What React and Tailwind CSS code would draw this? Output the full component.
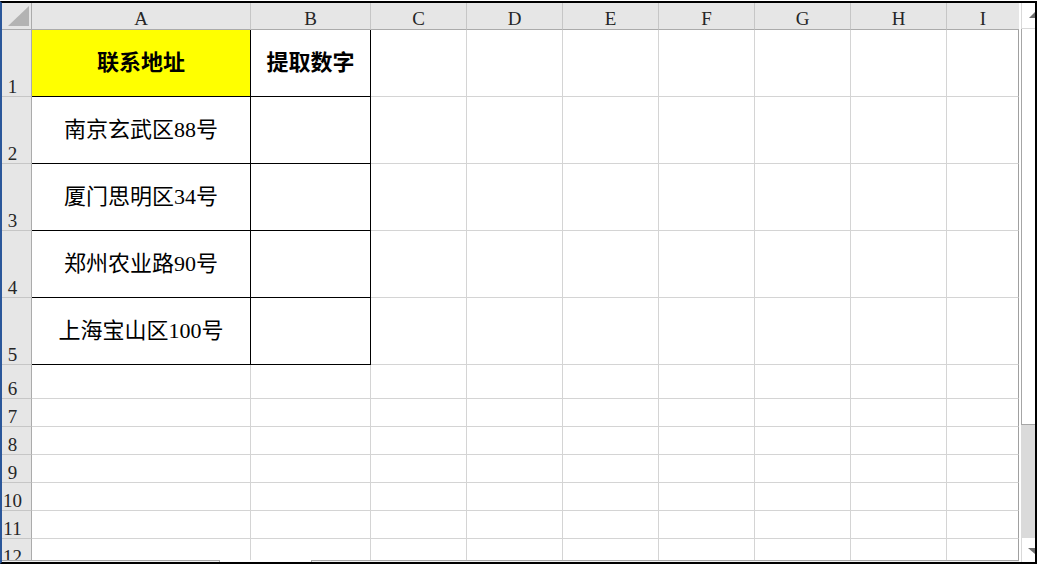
import React from "react";

const cols = ["A", "B", "C", "D", "E", "F", "G", "H", "I"];

const data = [
  ["联系地址", "提取数字"],
  ["南京玄武区88号", ""],
  ["厦门思明区34号", ""],
  ["郑州农业路90号", ""],
  ["上海宝山区100号", ""],
];

const rows = [1, 2, 3, 4, 5, 6, 7, 8, 9, 10, 11, 12];

const Cell = ({ row, col }) => {
  const inTable = row <= 5 && col < 2;
  const last = col === 8;
  let cls = "flex items-center justify-center border-r border-b ";
  if (inTable) {
    cls += "border-black";
  } else if (last) {
    cls += "border-b-[#d4d4d4] border-r-[#a0a0a0]";
  } else if (row === 5 && col === 2) {
    cls += "border-[#d4d4d4]";
  } else {
    cls += "border-[#d4d4d4]";
  }
  if (row === 1 && col === 0) cls += " bg-[#ffff00]";
  const text = inTable ? data[row - 1][col] : "";
  return (
    <div className={cls}>
      {text && (
        <span
          className={
            row === 1
              ? "text-[22px] leading-none font-bold text-black"
              : "text-[22px] leading-none text-black"
          }
        >
          {text}
        </span>
      )}
    </div>
  );
};

const App = () => {
  return (
    <div className="w-[1038px] h-[564px] bg-white pt-[1px] overflow-hidden font-['Liberation_Serif','Noto_Sans_CJK_SC',serif]">
      <div className="w-[1037px] h-[563px] flex border-t-2 border-t-black border-l-2 border-l-[#2b579a] border-r-2 border-r-black border-b-2 border-b-black">
        {/* sheet */}
        <div className="w-[1017px] flex flex-col">
          <div className="h-[557px] overflow-hidden">
            <div className="grid grid-cols-[30px_219px_120px_96px_96px_96px_96px_96px_96px_72px] grid-rows-[27px_67px_67px_67px_67px_67px_34px_28px_28px_28px_28px_28px_28px]">
              <div className="relative bg-[#e6e6e6] border-r border-b border-[#ababab]">
                <svg className="absolute left-0 top-0" width="30" height="27" viewBox="0 0 30 27">
                  <polygon points="6,23 27,23 27,3" fill="#b3b3b3" />
                </svg>
              </div>
              {cols.map((c, i) => (
                <div
                  key={c}
                  className={
                    i === 8
                      ? "flex justify-center items-center pt-[5px] bg-[#e6e6e6] border-b border-b-[#ababab] text-[19px] leading-[19px] text-[#262626]"
                      : "flex justify-center items-center pt-[5px] bg-[#e6e6e6] border-b border-b-[#ababab] border-r border-r-[#c6c6c6] text-[19px] leading-[19px] text-[#262626]"
                  }
                >
                  {c}
                </div>
              ))}
              {rows.map((r) => (
                <React.Fragment key={r}>
                  <div className="flex items-end justify-center pr-[8px] bg-[#e6e6e6] border-r border-r-[#ababab] border-b border-b-[#c6c6c6] text-[19px] leading-[19px] text-[#262626]">
                    {r}
                  </div>
                  {cols.map((c, i) => (
                    <Cell key={c} row={r} col={i} />
                  ))}
                </React.Fragment>
              ))}
            </div>
          </div>
          <div className="h-[2px] flex">
            <div className="w-[218px] h-[2px] bg-[#f0f0f0] border-t border-r border-[#a8a8a8]" />
            <div className="w-[91px] h-[2px] bg-white" />
            <div className="flex-1 h-[2px] bg-[#f0f0f0] border-t border-l border-[#a8a8a8]" />
          </div>
        </div>
        <div className="w-[2px]" />
        {/* vertical scrollbar */}
        <div className="w-[14px] flex flex-col">
          <div className="relative h-[26px] bg-white border-l border-l-[#d9d9d9] border-b border-b-[#d9d9d9]">
            <svg className="absolute left-[-1px] top-0" width="14" height="26" viewBox="0 0 14 26">
              <polygon points="14,9 8,15 14,15" fill="#6e6e6e" />
            </svg>
          </div>
          <div className="h-[396px] bg-white border-l border-b border-[#a6a6a6]" />
          <div className="h-[113px] bg-[#dadada]" />
          <div className="relative flex-1 bg-white border-l border-l-[#d9d9d9]">
            <svg className="absolute left-[-1px] top-0" width="14" height="24" viewBox="0 0 14 24">
              <polygon points="7,10 14,10 14,16" fill="#6e6e6e" />
            </svg>
          </div>
        </div>
      </div>
    </div>
  );
};

export default App;
